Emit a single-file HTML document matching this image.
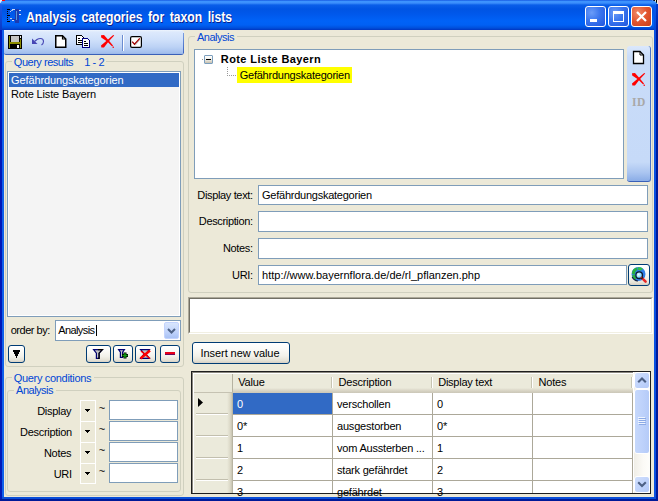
<!DOCTYPE html>
<html><head><meta charset="utf-8">
<style>
*{box-sizing:border-box;margin:0;padding:0}
html,body{width:658px;height:501px;overflow:hidden;background:#fff}
body{position:relative;font-family:"Liberation Sans",sans-serif;font-size:11px;color:#000}
.a{position:absolute}
.t{position:absolute;white-space:pre}
.gb{position:absolute;border:1px solid #d0d0bf;border-radius:3px}
.gm{position:absolute;background:#ece9d8;height:3px}
.tb{position:absolute;background:#fff;border:1px solid #7f9db9}
.btn{position:absolute;border:1px solid #003c74;border-radius:3px;background:linear-gradient(#fff 0%,#fbfbf8 30%,#f2f1ea 65%,#e5e2d6 88%,#d6d0c5 100%)}
</style></head><body>
<div class="a" style="left:0;top:0;width:658px;height:501px;background:#0a3bd0;border-radius:5px 7px 0 0"></div>
<div class="a" style="left:0;top:0;width:3px;height:3px;background:#e8eef8"></div><div class="a" style="left:2px;top:0;width:3px;height:1px;background:#f00;z-index:5"></div><div class="a" style="left:652px;top:0;width:6px;height:5px;background:#f2eed8"></div><div class="a" style="left:653px;top:0;width:2px;height:1px;background:#000"></div><div class="a" style="left:656px;top:0;width:1px;height:3px;background:#000"></div>
<div class="a" style="left:0;top:30px;width:2px;height:471px;background:#0019b8"></div>
<div class="a" style="left:2px;top:30px;width:2px;height:469px;background:#1060ea"></div>
<div class="a" style="left:656px;top:30px;width:2px;height:471px;background:#001a9a"></div>
<div class="a" style="left:654px;top:30px;width:2px;height:469px;background:#0a50e0"></div>
<div class="a" style="left:0;top:499px;width:658px;height:2px;background:#001a98"></div>
<div class="a" style="left:2px;top:497px;width:654px;height:2px;background:#0a4fd8"></div>
<div class="a" style="left:0;top:0;width:658px;height:30px;border-radius:5px 7px 0 0;background:linear-gradient(#0a45d8 0px,#3d95ff 1px,#3d8ffc 3px,#0a5ee9 5px,#0054e3 9px,#0058eb 14px,#0062f7 21px,#0060f4 25px,#004fdb 28px,#0035c0 30px)"></div>
<div class="a" style="left:0;top:5px;width:2px;height:25px;background:linear-gradient(#1a5ae8,#0838c8)"></div><div class="a" style="left:654px;top:6px;width:2px;height:24px;background:linear-gradient(#0a58ea,#0048d8)"></div><div class="a" style="left:656px;top:4px;width:2px;height:26px;background:linear-gradient(#0040d0,#0020a8)"></div><div class="t" style='left:25.60px;top:9px;font:700 14px/17px "Liberation Sans";color:#fff;letter-spacing:0.000px;text-shadow:1px 1px 0 #0a1e8a;transform:scaleX(0.87);transform-origin:0 0;word-spacing:2.4px'>Analysis categories for taxon lists</div>
<div class="a" style="left:4px;top:30px;width:650px;height:467px;background:#ece9d8"></div>
<svg class="a" style="left:6px;top:8px" width="17" height="17" shape-rendering="crispEdges">
<rect x="1" y="1" width="3" height="1" fill="#000"/><rect x="1" y="3" width="1" height="1" fill="#000"/><rect x="1" y="5" width="1" height="1" fill="#000"/><rect x="1" y="7" width="3" height="1" fill="#000"/><rect x="1" y="9" width="1" height="1" fill="#000"/><rect x="1" y="11" width="1" height="1" fill="#000"/><rect x="1" y="13" width="3" height="1" fill="#000"/>
<rect x="9" y="1" width="4" height="14" fill="#1c3bb0"/><rect x="10" y="3" width="1" height="9" fill="#5a9ad8"/>
<rect x="6" y="1" width="3" height="1" fill="#c8d8f8"/><rect x="5" y="2" width="2" height="1" fill="#9ab8ec"/><rect x="4" y="3" width="1" height="1" fill="#c8c8e8"/>
<rect x="13" y="2" width="2" height="1" fill="#d8e0f8"/><rect x="13" y="6" width="2" height="1" fill="#d8e0f8"/>
<rect x="4" y="10" width="2" height="1" fill="#c8c8e8"/><rect x="6" y="11" width="3" height="1" fill="#2030a0"/><rect x="6" y="12" width="2" height="1" fill="#d8e0f8"/>
</svg>
<div class="a" style="left:585px;top:6px;width:21px;height:21px;border:1px solid #fff;border-radius:3px;background:radial-gradient(circle at 30% 30%,#6b9cf8 0%,#3a75ee 45%,#1f55dd 100%)"></div>
<div class="a" style="left:590px;top:19px;width:7px;height:3px;background:#fff"></div>
<div class="a" style="left:608px;top:6px;width:21px;height:21px;border:1px solid #fff;border-radius:3px;background:radial-gradient(circle at 30% 30%,#6b9cf8 0%,#3a75ee 45%,#1f55dd 100%)"></div>
<div class="a" style="left:613px;top:11px;width:11px;height:11px;border:1px solid #fff;border-top-width:3px"></div>
<div class="a" style="left:631px;top:6px;width:21px;height:21px;border:1px solid #fff;border-radius:3px;background:radial-gradient(circle at 30% 30%,#f08a6a 0%,#e2542e 50%,#c93f1a 100%)"></div>
<svg class="a" style="left:631px;top:6px" width="21" height="21"><path d="M6 6 L15 15 M15 6 L6 15" stroke="#fff" stroke-width="2.2"/></svg>

<div class="a" style="left:4px;top:30px;width:180px;height:25px;border-radius:0 3px 3px 2px;background:linear-gradient(#eef4fd 0,#dde9fc 2px,#cfe0fa 10px,#bcd2f5 17px,#a3bfed 23px,#98b6e8 24px);border-bottom:1px solid #3a60b8"></div><div class="a" style="left:183px;top:33px;width:1px;height:20px;background:linear-gradient(#7a9ee0,#3a62c0)"></div>
<svg class="a" style="left:8px;top:35px" width="14" height="14" shape-rendering="crispEdges">
<rect x="0" y="0" width="14" height="14" fill="#000"/>
<rect x="1" y="1" width="1" height="12" fill="#8c8c00"/>
<rect x="12" y="4" width="1" height="9" fill="#8c8c00"/>
<rect x="1" y="7" width="12" height="2" fill="#8c8c00"/>
<rect x="3" y="1" width="8" height="6" fill="#c4c4c4"/>
<rect x="12" y="1" width="1" height="2" fill="#eee"/>
<rect x="9" y="10" width="2" height="3" fill="#f4f4f4"/>
</svg>
<svg class="a" style="left:30px;top:36px" width="16" height="12">
<path d="M2 2.5 L2 8 L7.5 8 Z" fill="#4646b4"/>
<path d="M4.5 5.5 L7 3.5 Q8.5 2.5 10.5 2.5 Q13.5 2.5 13.5 5.5 Q13.5 7.5 11.5 9" fill="none" stroke="#4646b4" stroke-width="1.1"/>
</svg>
<svg class="a" style="left:55px;top:35px" width="12" height="14">
<path d="M0.75 0.75 H7.5 L10.75 4 V12.25 H0.75 Z" fill="#fff" stroke="#000" stroke-width="1.5"/>
<path d="M7.5 1 V4 H10.5" fill="none" stroke="#000" stroke-width="1.2"/>
</svg>
<svg class="a" style="left:76px;top:35px" width="16" height="14" shape-rendering="crispEdges">
<path d="M0 0 H6 V1 H7 V2 H8 V10 H0 Z" fill="#000"/><rect x="1" y="1" width="5" height="8" fill="#fff"/><rect x="6" y="2" width="1" height="7" fill="#fff"/>
<rect x="2" y="3" width="2" height="1" fill="#000"/><rect x="2" y="5" width="4" height="1" fill="#000"/><rect x="2" y="7" width="4" height="1" fill="#000"/>
<path d="M6 3 H12 V4 H13 V5 H14 V13 H6 Z" fill="#000080"/><rect x="7" y="4" width="5" height="8" fill="#fff"/><rect x="12" y="5" width="1" height="7" fill="#fff"/>
<rect x="8" y="6" width="2" height="1" fill="#000"/><rect x="8" y="8" width="4" height="1" fill="#000"/><rect x="8" y="10" width="4" height="1" fill="#000"/>
</svg>
<svg class="a" style="left:100px;top:34px" width="16" height="15">
<path d="M1 1.2 L4 1 L8.6 6.2 L13 11.4 L12.2 12.4 L7.2 7.6 L1.2 3.4 Z" fill="#f00"/>
<rect x="12.6" y="12.6" width="1.3" height="1.3" fill="#f00"/>
<path d="M13.2 1 L14.2 1.6 L8.6 7.6 L4 13.6 L1.4 13.4 L1 11.6 L6.6 6.8 Z" fill="#f00"/>
</svg>
<div class="a" style="left:122px;top:35px;width:1px;height:16px;background:#6a8cd0;box-shadow:1px 0 0 #fff"></div>
<svg class="a" style="left:130px;top:36px" width="12" height="12">
<rect x="0.6" y="0.6" width="10.8" height="10.8" rx="1.4" fill="#fff" stroke="#000" stroke-width="1.2"/>
<path d="M3.5 7.5 L5.5 9 L10 3.5" fill="none" stroke="#c8c8c8" stroke-width="1"/><path d="M2.2 5.6 L4.5 8.2 L9.8 2.4" fill="none" stroke="#a00000" stroke-width="1.3"/>
</svg>

<div class="gb" style="left:5px;top:61px;width:179px;height:306px"></div>
<div class="gm" style="left:12px;top:60px;width:94px"></div>
<div class="t" style='left:13.80px;top:56px;font:400 11px/13px "Liberation Sans";color:#0046d5;letter-spacing:-0.476px;'>Query results</div><div class="t" style='left:84.30px;top:56px;font:400 11px/13px "Liberation Sans";color:#0046d5;letter-spacing:-0.448px;'>1 - 2</div>
<div class="a" style="left:7px;top:71px;width:174px;height:246px;border:1px solid #7f9db9;background:#f4f4f4;box-shadow:inset 0 0 0 1px #fff"></div>
<div class="a" style="left:9px;top:73px;width:170px;height:14px;background:#316ac5"></div>
<div class="t" style='left:11.00px;top:74px;font:400 11px/13px "Liberation Sans";color:#fff;letter-spacing:-0.118px;'>Gefährdungskategorien</div><div class="t" style='left:11.00px;top:88px;font:400 11px/13px "Liberation Sans";color:#000;letter-spacing:-0.145px;'>Rote Liste Bayern</div><div class="t" style='left:10.70px;top:324px;font:400 11px/13px "Liberation Sans";color:#000;letter-spacing:-0.469px;'>order by:</div><div class="tb" style="left:55px;top:320px;width:126px;height:21px"></div><div class="t" style='left:58.20px;top:324px;font:400 11px/13px "Liberation Sans";color:#000;letter-spacing:-0.594px;'>Analysis</div><div class="a" style="left:96px;top:325px;width:1px;height:11px;background:#000"></div>
<div class="a" style="left:164px;top:322px;width:15px;height:17px;border-radius:2px;background:linear-gradient(#d9e6fd,#c0d3fb 60%,#a9c2f5);border:1px solid #c3d3fd"></div>
<svg class="a" style="left:164px;top:322px" width="15" height="17"><path d="M4 7 L7.5 10.5 L11 7" stroke="#4d6185" stroke-width="2" fill="none"/></svg>
<div class="btn" style="left:8px;top:345px;width:17px;height:18px"></div>
<svg class="a" style="left:8px;top:345px" width="17" height="18" shape-rendering="crispEdges"><rect x="5" y="5" width="7" height="2" fill="#000"/><rect x="6" y="7" width="5" height="2" fill="#000"/><rect x="7" y="9" width="3" height="2" fill="#000"/><rect x="8" y="11" width="1" height="2" fill="#000"/></svg>
<div class="btn" style="left:86px;top:345px;width:25px;height:18px"></div>
<svg class="a" style="left:86px;top:345px" width="25" height="18"><path d="M7.6 4.6 H16.4 L13.1 8.2 V13.4 H10.4 V8.2 Z" fill="#c4c4c4" stroke="#000070" stroke-width="1.2"/><path d="M12 4.6 H16.4 L13.1 8.2 V13.4 H12" fill="none" stroke="#000" stroke-width="1.2"/></svg>
<div class="btn" style="left:113px;top:345px;width:20px;height:18px"></div>
<svg class="a" style="left:113px;top:345px" width="20" height="18"><path d="M5.6 4.6 H11.4 L9.6 7.2 V12.4 H7.4 V7.2 Z" fill="#c4c4c4" stroke="#000070" stroke-width="1.2"/><path d="M9 10.5 H15 M12 7.5 V13.5" stroke="#000" stroke-width="3"/><path d="M9.5 10.5 H14.5 M12 8 V13" stroke="#10a010" stroke-width="1.4"/></svg>
<div class="btn" style="left:135px;top:345px;width:21px;height:18px"></div>
<svg class="a" style="left:135px;top:345px" width="21" height="18"><path d="M5.6 4.6 H14.4 L10.8 8.8 L14.4 13.4 H5.6 L9.2 8.8 Z" fill="#c4c4c4" stroke="#000070" stroke-width="1.2"/><path d="M6 6 L15 13.5" stroke="#f00" stroke-width="1.6"/><path d="M15 5.5 L5.5 13.5" stroke="#f00" stroke-width="2.4"/></svg>
<div class="btn" style="left:160px;top:345px;width:20px;height:18px"></div>
<div class="a" style="left:165px;top:352px;width:10px;height:3px;background:#e8001a;border-bottom:1px solid #6b0a5a"></div>

<div class="gb" style="left:5px;top:377px;width:179px;height:119px"></div>
<div class="gm" style="left:12px;top:376px;width:82px"></div>
<div class="gb" style="left:7px;top:390px;width:174px;height:102px"></div>
<div class="gm" style="left:14px;top:389px;width:42px"></div>
<div class="t" style='left:13.70px;top:372px;font:400 11px/13px "Liberation Sans";color:#0046d5;letter-spacing:-0.316px;'>Query conditions</div><div class="t" style='left:16.10px;top:384px;font:400 11px/13px "Liberation Sans";color:#0046d5;letter-spacing:-0.509px;'>Analysis</div><div class="t" style='left:37.23px;top:405px;font:400 11px/13px "Liberation Sans";color:#000;letter-spacing:-0.300px;'>Display</div><div class="a" style="left:80px;top:400px;width:16px;height:21px;border:1px solid #fff;border-bottom-width:0px"></div><svg class="a" style="left:80px;top:400px" width="16" height="21" shape-rendering="crispEdges"><rect x="5" y="9" width="5" height="1" fill="#000"/><rect x="6" y="10" width="3" height="1" fill="#000"/><rect x="7" y="11" width="1" height="1" fill="#000"/></svg><div class="t" style='left:98.70px;top:402px;font:400 11px/13px "Liberation Sans";color:#000;letter-spacing:0.000px;'>~</div><div class="tb" style="left:109px;top:400px;width:69px;height:20px"></div><div class="t" style='left:20.10px;top:426px;font:400 11px/13px "Liberation Sans";color:#000;letter-spacing:-0.300px;'>Description</div><div class="a" style="left:80px;top:421px;width:16px;height:21px;border:1px solid #fff;border-bottom-width:0px"></div><svg class="a" style="left:80px;top:421px" width="16" height="21" shape-rendering="crispEdges"><rect x="5" y="9" width="5" height="1" fill="#000"/><rect x="6" y="10" width="3" height="1" fill="#000"/><rect x="7" y="11" width="1" height="1" fill="#000"/></svg><div class="t" style='left:98.70px;top:423px;font:400 11px/13px "Liberation Sans";color:#000;letter-spacing:0.000px;'>~</div><div class="tb" style="left:109px;top:421px;width:69px;height:20px"></div><div class="t" style='left:43.96px;top:447px;font:400 11px/13px "Liberation Sans";color:#000;letter-spacing:-0.300px;'>Notes</div><div class="a" style="left:80px;top:442px;width:16px;height:21px;border:1px solid #fff;border-bottom-width:0px"></div><svg class="a" style="left:80px;top:442px" width="16" height="21" shape-rendering="crispEdges"><rect x="5" y="9" width="5" height="1" fill="#000"/><rect x="6" y="10" width="3" height="1" fill="#000"/><rect x="7" y="11" width="1" height="1" fill="#000"/></svg><div class="t" style='left:98.70px;top:444px;font:400 11px/13px "Liberation Sans";color:#000;letter-spacing:0.000px;'>~</div><div class="tb" style="left:109px;top:442px;width:69px;height:20px"></div><div class="t" style='left:53.71px;top:468px;font:400 11px/13px "Liberation Sans";color:#000;letter-spacing:-0.300px;'>URI</div><div class="a" style="left:80px;top:463px;width:16px;height:21px;border:1px solid #fff;border-bottom-width:1px"></div><svg class="a" style="left:80px;top:463px" width="16" height="21" shape-rendering="crispEdges"><rect x="5" y="9" width="5" height="1" fill="#000"/><rect x="6" y="10" width="3" height="1" fill="#000"/><rect x="7" y="11" width="1" height="1" fill="#000"/></svg><div class="t" style='left:98.70px;top:465px;font:400 11px/13px "Liberation Sans";color:#000;letter-spacing:0.000px;'>~</div><div class="tb" style="left:109px;top:463px;width:69px;height:20px"></div>
<div class="gb" style="left:188px;top:36px;width:465px;height:257px"></div>
<div class="gm" style="left:195px;top:35px;width:42px"></div>
<div class="t" style='left:197.00px;top:31px;font:400 11px/13px "Liberation Sans";color:#0046d5;letter-spacing:-0.494px;'>Analysis</div>
<div class="tb" style="left:194px;top:49px;width:430px;height:130px"></div>
<div class="a" style="left:204px;top:55px;width:9px;height:9px;border:1px solid #7b9ebd;border-radius:1px;background:linear-gradient(#fff,#f0efe8 50%,#c6bfae)"></div>
<div class="a" style="left:206px;top:59px;width:5px;height:1px;background:#000"></div><div class="a" style="left:202px;top:59px;width:1px;height:1px;background:#999"></div>
<div class="t" style='left:220.80px;top:53px;font:700 11px/13px "Liberation Sans";color:#000;letter-spacing:0.400px;'>Rote Liste Bayern</div>
<div class="a" style="left:227px;top:67px;width:1px;height:9px;border-left:1px dotted #999"></div>
<div class="a" style="left:227px;top:75px;width:9px;height:1px;border-top:1px dotted #999"></div>
<div class="a" style="left:237px;top:67px;width:115px;height:16px;background:#ffff00"></div>
<div class="t" style='left:239.70px;top:69px;font:400 11px/13px "Liberation Sans";color:#000;letter-spacing:-0.228px;'>Gefährdungskategorien</div>
<div class="a" style="left:627px;top:46px;width:24px;height:136px;border-radius:3px 3px 3px 3px;background:linear-gradient(#dbe8fc 0%,#c9dcf9 8%,#c6daf8 86%,#a9c4f0 94%,#8fb0e8 99%);border-right:1px solid #4a72c8;border-bottom:1px solid #3a60b8"></div>
<svg class="a" style="left:632px;top:50px" width="13" height="15"><path d="M1.5 1.5 H8 L11.5 5 V13.5 H1.5 Z" fill="#fff" stroke="#000" stroke-width="1.3"/><path d="M8 1.5 V5 H11.5" fill="none" stroke="#000" stroke-width="1"/></svg>
<svg class="a" style="left:631px;top:72px" width="16" height="15">
<path d="M1 1.2 L4 1 L8.6 6.2 L13 11.4 L12.2 12.4 L7.2 7.6 L1.2 3.4 Z" fill="#f00"/>
<rect x="12.6" y="12.6" width="1.3" height="1.3" fill="#f00"/>
<path d="M13.2 1 L14.2 1.6 L8.6 7.6 L4 13.6 L1.4 13.4 L1 11.6 L6.6 6.8 Z" fill="#f00"/>
</svg>
<div class="t" style='left:632.00px;top:95px;font:700 11.5px/14px "Liberation Serif";color:#a8a8a8;letter-spacing:0.600px;'>ID</div><div class="t" style='left:197.35px;top:189px;font:400 11px/13px "Liberation Sans";color:#000;letter-spacing:-0.350px;'>Display text:</div><div class="tb" style="left:258px;top:185px;width:390px;height:20px"></div><div class="t" style='left:198.83px;top:215px;font:400 11px/13px "Liberation Sans";color:#000;letter-spacing:-0.350px;'>Description:</div><div class="tb" style="left:258px;top:211px;width:390px;height:21px"></div><div class="t" style='left:223.01px;top:242px;font:400 11px/13px "Liberation Sans";color:#000;letter-spacing:-0.350px;'>Notes:</div><div class="tb" style="left:258px;top:238px;width:390px;height:21px"></div><div class="t" style='left:232.11px;top:269px;font:400 11px/13px "Liberation Sans";color:#000;letter-spacing:-0.350px;'>URI:</div><div class="tb" style="left:258px;top:265px;width:369px;height:20px"></div><div class="t" style='left:262.00px;top:189px;font:400 11px/13px "Liberation Sans";color:#000;letter-spacing:-0.243px;'>Gefährdungskategorien</div><div class="t" style='left:262.00px;top:269px;font:400 11px/13px "Liberation Sans";color:#000;letter-spacing:0.010px;'>http://www.bayernflora.de/de/rl_pflanzen.php</div>
<div class="btn" style="left:628px;top:264px;width:22px;height:22px"></div>
<svg class="a" style="left:628px;top:264px" width="22" height="22">
<defs><radialGradient id="lens" cx="0.4" cy="0.4" r="0.6"><stop offset="0" stop-color="#f4feff"/><stop offset="0.6" stop-color="#8fdcff"/><stop offset="1" stop-color="#3aa0e8"/></radialGradient></defs>
<circle cx="10.5" cy="10" r="7" fill="#2f7de8"/>
<path d="M4 10 A6.5 6.5 0 0 1 8.5 3.6 L9.5 6 A4.5 4.5 0 0 0 7 10.5 Z" fill="#28b040"/>
<path d="M9.5 3.5 A6.5 6.5 0 0 1 15 4.8 L13 6.5 A4 4 0 0 0 10 6 Z" fill="#30c048"/>
<path d="M4 11 A6.5 6.5 0 0 0 7.5 16 L8.5 13.5 A4 4 0 0 1 6.8 10.8 Z" fill="#28b040"/>
<path d="M4.2 13 A7 7 0 0 0 10 17" fill="none" stroke="#102040" stroke-width="1.2"/>
<circle cx="11.2" cy="11.2" r="3.3" fill="url(#lens)" stroke="#0c1a30" stroke-width="1.3"/>
<path d="M13.8 13.8 L17.6 17.6" stroke="#e82828" stroke-width="2.6" stroke-linecap="round"/>
<path d="M13.6 13.6 L14.6 14.6" stroke="#202020" stroke-width="2.4"/>
</svg>

<div class="a" style="left:188px;top:297px;width:465px;height:37px;background:#fff;border-style:solid;border-width:2px;border-color:#aca899 #fff #fff #aca899"></div>
<div class="a" style="left:189px;top:298px;width:463px;height:35px;border-style:solid;border-width:1px;border-color:#716f64 #f1efe2 #f1efe2 #716f64"></div>

<div class="btn" style="left:192px;top:342px;width:98px;height:22px"></div>
<div class="t" style='left:200.60px;top:347px;font:400 11px/13px "Liberation Sans";color:#000;letter-spacing:-0.079px;'>Insert new value</div>
<div class="a" style="left:191px;top:371px;width:460px;height:123px;border:1px solid #1e1e1e;background:#fff"></div>
<div class="a" style="left:192px;top:372px;width:441px;height:21px;background:linear-gradient(#ebeadb 0,#ebeadb 16px,#e3e1d2 17px,#d6d2c2 19px,#cbc7b8 21px)"></div>
<div class="a" style="left:192px;top:372px;width:41px;height:21px;background:#ebeadb;border-right:1px solid #b5b2a1;border-bottom:1px solid #c5c2b2"></div>
<div class="a" style="left:192px;top:393px;width:41px;height:100px;background:linear-gradient(to right,#ebeadb 0,#ebeadb 35px,#dcd9c8 38px,#c8c4b2 40px,#a9a592 41px)"></div>
<div class="a" style="left:192px;top:372px;width:441px;height:1px;background:#8a887e"></div><div class="a" style="left:192px;top:372px;width:1px;height:121px;background:#8a887e"></div><div class="a" style="left:193px;top:373px;width:440px;height:1px;background:#fff"></div><div class="a" style="left:193px;top:373px;width:1px;height:120px;background:#fff"></div>
<div class="t" style='left:238.30px;top:376px;font:400 11px/13px "Liberation Sans";color:#000;letter-spacing:-0.200px;'>Value</div><div class="t" style='left:338.60px;top:376px;font:400 11px/13px "Liberation Sans";color:#000;letter-spacing:-0.200px;'>Description</div><div class="a" style="left:331px;top:377px;width:1px;height:11px;background:#c7c5b2;box-shadow:1px 0 0 #fff"></div><div class="t" style='left:438.20px;top:376px;font:400 11px/13px "Liberation Sans";color:#000;letter-spacing:-0.245px;'>Display text</div><div class="a" style="left:431px;top:377px;width:1px;height:11px;background:#c7c5b2;box-shadow:1px 0 0 #fff"></div><div class="t" style='left:538.50px;top:376px;font:400 11px/13px "Liberation Sans";color:#000;letter-spacing:-0.200px;'>Notes</div><div class="a" style="left:531px;top:377px;width:1px;height:11px;background:#c7c5b2;box-shadow:1px 0 0 #fff"></div><div class="a" style="left:631px;top:377px;width:1px;height:11px;background:#c7c5b2;box-shadow:1px 0 0 #fff"></div><div class="a" style="left:233px;top:393px;width:99px;height:21px;background:#316ac5"></div><div class="t" style='left:237.00px;top:398px;font:400 11px/13px "Liberation Sans";color:#fff;letter-spacing:-0.200px;'>0</div><div class="t" style='left:337.00px;top:398px;font:400 11px/13px "Liberation Sans";color:#000;letter-spacing:-0.200px;'>verschollen</div><div class="t" style='left:437.00px;top:398px;font:400 11px/13px "Liberation Sans";color:#000;letter-spacing:-0.200px;'>0</div><div class="a" style="left:233px;top:414px;width:400px;height:1px;background:#aca899"></div><div class="a" style="left:196px;top:413px;width:32px;height:1px;background:#c2bfae;box-shadow:0 1px 0 #fff"></div><div class="t" style='left:237.00px;top:420px;font:400 11px/13px "Liberation Sans";color:#000;letter-spacing:-0.200px;'>0*</div><div class="t" style='left:337.00px;top:420px;font:400 11px/13px "Liberation Sans";color:#000;letter-spacing:-0.200px;'>ausgestorben</div><div class="t" style='left:437.00px;top:420px;font:400 11px/13px "Liberation Sans";color:#000;letter-spacing:-0.200px;'>0*</div><div class="a" style="left:233px;top:436px;width:400px;height:1px;background:#aca899"></div><div class="a" style="left:196px;top:435px;width:32px;height:1px;background:#c2bfae;box-shadow:0 1px 0 #fff"></div><div class="t" style='left:237.00px;top:442px;font:400 11px/13px "Liberation Sans";color:#000;letter-spacing:-0.200px;'>1</div><div class="t" style='left:337.00px;top:442px;font:400 11px/13px "Liberation Sans";color:#000;letter-spacing:-0.200px;'>vom Aussterben ...</div><div class="t" style='left:437.00px;top:442px;font:400 11px/13px "Liberation Sans";color:#000;letter-spacing:-0.200px;'>1</div><div class="a" style="left:233px;top:458px;width:400px;height:1px;background:#aca899"></div><div class="a" style="left:196px;top:457px;width:32px;height:1px;background:#c2bfae;box-shadow:0 1px 0 #fff"></div><div class="t" style='left:237.00px;top:464px;font:400 11px/13px "Liberation Sans";color:#000;letter-spacing:-0.200px;'>2</div><div class="t" style='left:337.00px;top:464px;font:400 11px/13px "Liberation Sans";color:#000;letter-spacing:-0.200px;'>stark gefährdet</div><div class="t" style='left:437.00px;top:464px;font:400 11px/13px "Liberation Sans";color:#000;letter-spacing:-0.200px;'>2</div><div class="a" style="left:233px;top:480px;width:400px;height:1px;background:#aca899"></div><div class="a" style="left:196px;top:479px;width:32px;height:1px;background:#c2bfae;box-shadow:0 1px 0 #fff"></div><div class="t" style='left:237.00px;top:486px;font:400 11px/13px "Liberation Sans";color:#000;letter-spacing:-0.200px;'>3</div><div class="t" style='left:337.00px;top:486px;font:400 11px/13px "Liberation Sans";color:#000;letter-spacing:-0.200px;'>gefährdet</div><div class="t" style='left:437.00px;top:486px;font:400 11px/13px "Liberation Sans";color:#000;letter-spacing:-0.200px;'>3</div><div class="a" style="left:332px;top:393px;width:1px;height:100px;background:#aca899"></div><div class="a" style="left:432px;top:393px;width:1px;height:100px;background:#aca899"></div><div class="a" style="left:532px;top:393px;width:1px;height:100px;background:#aca899"></div>

<svg class="a" style="left:197px;top:397px" width="8" height="11"><path d="M1 1 L6 5.5 L1 10 Z" fill="#000"/></svg>
<div class="a" style="left:632px;top:393px;width:1px;height:100px;background:#aca899"></div>
<div class="a" style="left:633px;top:372px;width:17px;height:121px;background:linear-gradient(to right,#efede6,#fbfaf6 60%,#fefefb)"></div>
<div class="a" style="left:633px;top:372px;width:1px;height:121px;background:#fff"></div>
<div class="a" style="left:634px;top:372px;width:16px;height:17px;border:1px solid #fff;border-radius:3px;background:linear-gradient(135deg,#d2e0fc,#c1d4fb 50%,#b3c9f8)"></div>
<svg class="a" style="left:634px;top:372px" width="16" height="17"><path d="M4.2 10.3 L8 6.5 L11.8 10.3" stroke="#4d6185" stroke-width="2.1" fill="none"/></svg>
<div class="a" style="left:634px;top:389px;width:16px;height:65px;border:1px solid #fff;border-radius:3px;background:linear-gradient(to right,#c6d8fb,#bed2fb 50%,#b5cbf8)"></div>
<div class="a" style="left:638px;top:417px;width:7px;height:1px;background:#eef4fe;box-shadow:0 2px 0 #eef4fe,0 4px 0 #eef4fe,0 6px 0 #eef4fe,1px 1px 0 #8caae6,1px 3px 0 #8caae6,1px 5px 0 #8caae6,1px 7px 0 #8caae6"></div>
<div class="a" style="left:634px;top:476px;width:16px;height:17px;border:1px solid #fff;border-radius:3px;background:linear-gradient(135deg,#d2e0fc,#c1d4fb 50%,#b3c9f8)"></div>
<svg class="a" style="left:634px;top:476px" width="16" height="17"><path d="M4.2 6.2 L8 10 L11.8 6.2" stroke="#4d6185" stroke-width="2.1" fill="none"/></svg>
</body></html>
